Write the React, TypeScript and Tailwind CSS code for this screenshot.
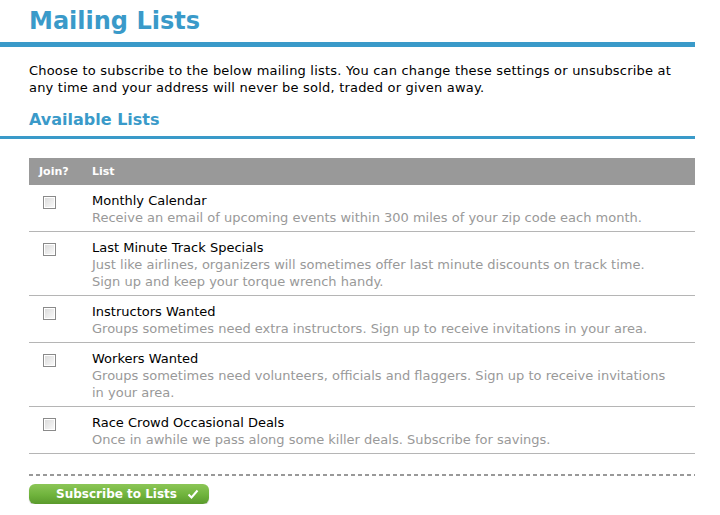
const lists = [
  {
    name: "Monthly Calendar",
    desc: "Receive an email of upcoming events within 300 miles of your zip code each month.",
  },
  {
    name: "Last Minute Track Specials",
    desc: "Just like airlines, organizers will sometimes offer last minute discounts on track time. Sign up and keep your torque wrench handy.",
  },
  {
    name: "Instructors Wanted",
    desc: "Groups sometimes need extra instructors. Sign up to receive invitations in your area.",
  },
  {
    name: "Workers Wanted",
    desc: "Groups sometimes need volunteers, officials and flaggers. Sign up to receive invitations in your area.",
  },
  {
    name: "Race Crowd Occasional Deals",
    desc: "Once in awhile we pass along some killer deals. Subscribe for savings.",
  },
];

const Checkbox = () => (
  <span className="mt-[4px] block h-[13px] w-[13px] border border-[#8a8a8a] bg-white p-[1px]">
    <span className="block h-full w-full bg-[linear-gradient(135deg,#dcdcdc,#f8f8f8)]" />
  </span>
);

export default function App() {
  return (
    <div className="w-[695px] bg-white font-['DejaVu_Sans',Verdana,sans-serif] text-[13px] leading-[17px] text-black">
      <h1 className="pl-[29px] pt-[5px] text-[24px] font-bold leading-[33px] text-[#3a9ac9]">
        Mailing Lists
      </h1>
      <div className="mt-[4px] h-[5px] bg-[#3a9ac9]" />

      <p className="pl-[29px] pr-[20px] pt-[15px] tracking-[0.2px]">
        Choose to subscribe to the below mailing lists. You can change these settings or unsubscribe at any time and your address will never be sold, traded or given away.
      </p>

      <h2 className="pl-[29px] pt-[13px] text-[16px] font-bold leading-[22px] text-[#3a9ac9]">
        Available Lists
      </h2>
      <div className="mt-[5px] h-[3px] bg-[#3a9ac9]" />

      <div className="ml-[29px] mt-[19px]">
        <div className="flex h-[27px] items-center bg-[#999999] text-[11px] font-bold text-white">
          <span className="w-[63px] pl-[10px]">Join?</span>
          <span>List</span>
        </div>

        {lists.map((item) => (
          <div
            key={item.name}
            className="flex border-b border-[#b5b5b5] pb-[5px] pt-[7px]"
          >
            <div className="w-[63px] pl-[14px]">
              <Checkbox />
            </div>
            <div className="flex-1 pr-[18px]">
              <div>{item.name}</div>
              <div className="text-[#999999]">{item.desc}</div>
            </div>
          </div>
        ))}

        <div className="mt-[20px] h-[2px] bg-[repeating-linear-gradient(90deg,#999999_0_4px,transparent_4px_7px)]" />

        <button className="mt-[8px] flex h-[20px] w-[180px] items-center justify-end gap-[10px] rounded-[6px] bg-[linear-gradient(180deg,#8cc657,#6fb33c_55%,#5a9a2c)] pr-[10px] text-[12px] font-bold text-white shadow-[0_1px_1px_rgba(0,0,0,0.25)]">
          <span>Subscribe to Lists</span>
          <svg width="12" height="10" viewBox="0 0 12 10">
            <path d="M1.5 5.5 L4.5 8.5 L10.5 1.5" fill="none" stroke="white" strokeWidth="2" />
          </svg>
        </button>
      </div>
    </div>
  );
}
